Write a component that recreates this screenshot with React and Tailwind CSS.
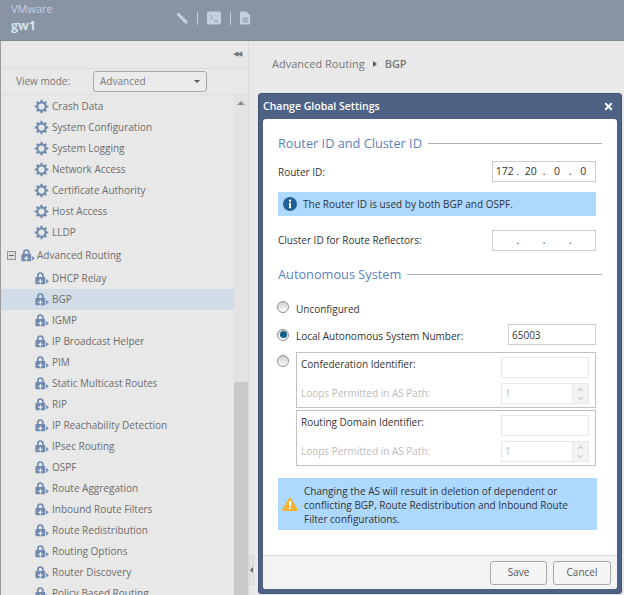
import React from 'react';
import { X, ChevronUp, ChevronDown } from 'lucide-react';

const font = "font-['Open_Sans','Liberation_Sans',sans-serif]";

const systemItems = ['Crash Data', 'System Configuration', 'System Logging', 'Network Access', 'Certificate Authority', 'Host Access', 'LLDP'];
const routingItems = [
  'DHCP Relay', 'BGP', 'IGMP', 'IP Broadcast Helper', 'PIM', 'Static Multicast Routes', 'RIP',
  'IP Reachability Detection', 'IPsec Routing', 'OSPF', 'Route Aggregation', 'Inbound Route Filters',
  'Route Redistribution', 'Routing Options', 'Router Discovery', 'Policy Based Routing',
];

function Gear() {
  return (
    <svg viewBox="0 0 16 16" className="w-[15px] h-[15px] shrink-0" fill="none">
      <circle cx="8" cy="8" r="4.4" stroke="#6f8bb0" strokeWidth="2.2" />
      <path d="M8 .8v3M8 12.2v3M.8 8h3M12.2 8h3M2.9 2.9l2.1 2.1M11 11l2.1 2.1M13.1 2.9L11 5M5 11l-2.100 2.100" stroke="#6f8bb0" strokeWidth="2.2" />
    </svg>
  );
}

function LockArrow() {
  return (
    <svg viewBox="0 0 16 16" className="w-[15px] h-[15px] shrink-0" fill="#6f8bb0">
      <path d="M3.200 6.500V4.800a3.600 3.600 0 0 1 7.200 0v1.700h.6c.6 0 1 .4 1 1v5.600c0 .6-.4 1-1 1H2.500c-.6 0-1-.4-1-1V7.500c0-.6.4-1 1-1zm1.800 0h3.600V4.800a1.800 1.800 0 0 0-3.600 0z" />
      <path d="M6.200 8.500v2H4.500v1.200h1.700v2h1.200v-2h1.700v-1.200H7.400v-2z" fill="#e8e8e8" />
      <path d="M13 8.500l2.800 2.500-2.800 2.500z" />
    </svg>
  );
}

function TreeRow({ label, active, icon: Icon }) {
  return (
    <div className={`h-[21px] flex items-center gap-[3px] pl-[33px] ${active ? 'bg-[#d0dce8]' : ''}`}>
      <Icon />
      <span className="text-[10px] text-[#6d6d6d] whitespace-nowrap">{label}</span>
    </div>
  );
}

function Sidebar() {
  return (
    <aside className="w-[249px] h-full shrink-0 flex flex-col bg-[#e8e8e8] border-l border-l-[#9a9a9a] border-r border-r-[#dcdcdc] overflow-hidden">
      <div className="h-[28px] shrink-0 flex items-center justify-end pr-[6px] border-b border-dotted border-[#d2d2d2]">
        <span className="text-[7px] text-[#777] tracking-[-1.5px] pr-[2px]">◀◀</span>
      </div>
      <div className="h-[26px] shrink-0 flex items-center pl-[15px] border-b border-dotted border-[#d2d2d2]">
        <span className="w-[77px] text-[10px] text-[#777]">View mode:</span>
        <div className="w-[114px] h-[21px] flex items-center justify-between pl-[6px] pr-[6px] rounded-[3px] border border-[#a8a8a8] bg-[#ebebeb]">
          <span className="text-[10px] text-[#7b7b7b]">Advanced</span>
          <span className="w-0 h-0 border-x-[3px] border-x-transparent border-t-[3px] border-t-[#555]" />
        </div>
      </div>
      <div className="flex-1 flex min-h-0">
        <div className="flex-1 min-w-0 overflow-hidden pt-[1px]">
          {systemItems.map((l) => <TreeRow key={l} label={l} icon={Gear} />)}
          <div className="h-[24px] flex items-center pl-[6px]">
            <span className="w-[9px] h-[9px] shrink-0 flex items-center justify-center border border-[#8b949f] bg-[#ddd] mr-[4px]">
              <span className="w-[5px] h-[1px] bg-[#666]" />
            </span>
            <LockArrow />
            <span className="ml-[2px] text-[10px] text-[#6d6d6d] whitespace-nowrap">Advanced Routing</span>
          </div>
          <div className="pt-[1px]">
            {routingItems.map((l) => <TreeRow key={l} label={l} icon={LockArrow} active={l === 'BGP'} />)}
          </div>
        </div>
        <div className="w-[14px] shrink-0 flex flex-col bg-[#e3e3e3]">
          <div className="h-[287px] flex justify-center pt-[6px]">
            <span className="w-0 h-0 border-x-[4px] border-x-transparent border-b-[4px] border-b-[#8c8c8c]" />
          </div>
          <div className="flex-1 bg-[#c9c9c9]" />
        </div>
      </div>
    </aside>
  );
}

function Heading({ children }) {
  return (
    <div className="flex items-center gap-[6px] h-[20px]">
      <span className="text-[12.75px] text-[#5b82bd] whitespace-nowrap pt-[2px]">{children}</span>
      <span className="flex-1 h-[1px] bg-[#abb1bf]" />
    </div>
  );
}

function Field({ className = '', children }) {
  return (
    <div className={`h-[21px] flex items-center bg-white border border-[#cdcdcd] text-[#333] text-[10px] ${className}`}>
      {children}
    </div>
  );
}

function IpField({ parts }) {
  return (
    <Field className="w-[104px] shrink-0 ml-auto">
      {parts.map((p, i) => (
        <React.Fragment key={i}>
          <span className="w-[23.5px] text-center text-[10.5px]">{p}</span>
          {i < 3 && <span className="w-[3px] text-center">.</span>}
        </React.Fragment>
      ))}
    </Field>
  );
}

function Radio({ checked }) {
  return (
    <span className="w-[12px] h-[12px] shrink-0 -ml-[1px] mr-[1px] rounded-full border border-[#8f8f8f] bg-gradient-to-b from-[#cfcfcf] to-white flex items-center justify-center">
      {checked && <span className="w-[7px] h-[7px] rounded-full bg-[#14608f]" />}
    </span>
  );
}

function LoopsRow() {
  return (
    <div className="flex items-center mt-[5px]">
      <span className="text-[10px] text-[#bcbcbc]">Loops Permitted in AS Path:</span>
      <div className="w-[88px] h-[21px] ml-auto flex border border-[#e8e8e8] bg-white">
        <span className="flex-1 pl-[3px] text-[10px] leading-[19px] text-[#c4c4c4]">1</span>
        <div className="w-[16px] flex flex-col items-center justify-center bg-[#f3f3f3] border-l border-[#e8e8e8] text-[#c8c8c8]">
          <ChevronUp size={9} strokeWidth={3} />
          <ChevronDown size={9} strokeWidth={3} />
        </div>
      </div>
    </div>
  );
}

function IdentifierBox({ label }) {
  return (
    <div className="h-[56px] border border-[#c2c2c2] pt-[4px] pl-[4px] pr-[6px]">
      <div className="flex items-start">
        <span className="text-[10px] text-[#333]">{label}</span>
        <div className="w-[88px] h-[21px] ml-auto bg-white border border-[#e8e8e8]" />
      </div>
      <LoopsRow />
    </div>
  );
}

function Modal() {
  return (
    <div className="absolute left-[258px] top-[93px] w-[364px] h-[501px] flex flex-col bg-[#4e6285] rounded-[3px] border border-[#3f5375] px-[4px] pb-[4px]">
      <div className="h-[25px] shrink-0 flex items-center justify-between pr-[3px]">
        <span className="text-[10.5px] font-semibold text-white">Change Global Settings</span>
        <X size={11} strokeWidth={4} className="text-white" />
      </div>
      <div className="flex-1 flex flex-col min-h-0 bg-white rounded-[3px] overflow-hidden">
        <div className="flex-1 px-[15px] pt-[14px]">
          <Heading>Router ID and Cluster ID</Heading>
          <div className="flex items-center mt-[8px] pr-[6px]">
            <span className="text-[10px] text-[#333] pt-[1px]">Router ID:</span>
            <IpField parts={['172', '20', '0', '0']} />
          </div>
          <div className="h-[24px] flex items-center mt-[10px] mr-[6px] pl-[5px] gap-[6px] bg-[#add8ff]">
            <svg viewBox="0 0 14 14" className="w-[14px] h-[14px] shrink-0">
              <circle cx="7" cy="7" r="7" fill="#1f5f96" />
              <circle cx="7" cy="3.800" r="1.200" fill="#ffffff" />
              <rect x="6" y="5.800" width="2" height="5.400" fill="#ffffff" />
            </svg>
            <span className="text-[10px] text-[#333]">The Router ID is used by both BGP and OSPF.</span>
          </div>
          <div className="flex items-center mt-[14px] pr-[6px]">
            <span className="text-[10px] text-[#333]">Cluster ID for Route Reflectors:</span>
            <IpField parts={['', '', '', '']} />
          </div>
          <div className="mt-[13px]">
            <Heading>Autonomous System</Heading>
          </div>
          <div className="flex items-center gap-[6px] mt-[16px] h-[14px]">
            <Radio />
            <span className="text-[10px] text-[#333] pt-[5px]">Unconfigured</span>
          </div>
          <div className="flex items-center gap-[6px] mt-[10px] pr-[6px]">
            <Radio checked />
            <span className="text-[10px] text-[#333] pt-[3px]">Local Autonomous System Number:</span>
            <Field className="w-[88px] ml-auto pl-[3px] pt-[2px]">65003</Field>
          </div>
          <div className="flex gap-[6px] mt-[7px] pr-[6px]">
            <div className="pt-[3px]"><Radio /></div>
            <div className="flex-1 flex flex-col gap-[2px]">
              <IdentifierBox label="Confederation Identifier:" />
              <IdentifierBox label="Routing Domain Identifier:" />
            </div>
          </div>
          <div className="h-[52px] flex items-center mt-[12px] mr-[5px] pl-[4px] gap-[6px] bg-[#add8ff]">
            <svg viewBox="0 0 16 14" className="w-[16px] h-[14px] shrink-0">
              <path d="M8 .5c.5 0 .9.3 1.100.7l6.500 11c.5.8 0 1.800-1 1.800H1.400c-1 0-1.500-1-1-1.800l6.500-11C7.100.8 7.500.5 8 .5z" fill="#f5b133" />
              <rect x="7" y="4" width="2" height="5.200" fill="#ffffff" />
              <rect x="7" y="10.200" width="2" height="2" fill="#ffffff" />
            </svg>
            <p className="text-[10px] leading-[14px] text-[#333] pt-[2px]">
              Changing the AS will result in deletion of dependent or<br />
              conflicting BGP, Route Redistribution and Inbound Route<br />
              Filter configurations.
            </p>
          </div>
        </div>
        <div className="h-[34px] shrink-0 flex items-center justify-end gap-[6px] pr-[6px] bg-[#f3f3f3] border-t border-[#d4d4d4]">
          <button className="w-[57px] h-[24px] rounded-[3px] border border-[#a8a8a8] bg-[#f5f5f5] text-[10px] text-[#555]">Save</button>
          <button className="w-[58px] h-[24px] rounded-[3px] border border-[#a8a8a8] bg-[#f5f5f5] text-[10px] text-[#555]">Cancel</button>
        </div>
      </div>
    </div>
  );
}

export default function App() {
  return (
    <div className={`relative w-[624px] h-[595px] overflow-hidden flex flex-col bg-[#e8e8e8] ${font}`}>
      <header className="h-[41px] shrink-0 flex bg-[#8893a3] border-b border-[#7d8796]">
        <div className="w-[176px] pl-[11px] pt-[1px]">
          <div className="text-[11px] leading-[15px] text-[#c2cfe0]">VMware</div>
          <div className="text-[12.5px] leading-[16px] mt-[2px] font-bold text-[#d7e2ef]">gw1</div>
        </div>
        <div className="flex items-center gap-[9px] pb-[4px]">
          <svg viewBox="0 0 12 12" className="w-[12px] h-[12px]" fill="#c3d0e0">
            <path d="M.5 2.500L2.500.5l9 8.500v2.500H9z" />
          </svg>
          <span className="w-[1px] h-[13px] bg-[#c3d0e0]" />
          <svg viewBox="0 0 14 14" className="w-[14px] h-[14px]">
            <rect width="14" height="13" y=".5" rx="2" fill="#c3d0e0" />
            <path d="M3 4l2.500 2.500L3 9M7 10h4" stroke="#8893a3" strokeWidth="1" fill="none" />
          </svg>
          <span className="w-[1px] h-[13px] bg-[#c3d0e0]" />
          <svg viewBox="0 0 12 14" className="w-[11px] h-[14px]">
            <path d="M1 0h6l4 4v9a1 1 0 0 1-1 1H1a1 1 0 0 1-1-1V1a1 1 0 0 1 1-1z" fill="#c3d0e0" />
            <path d="M3 7h6M3 9h6M3 11h6" stroke="#8893a3" strokeWidth="1" />
          </svg>
        </div>
      </header>
      <div className="flex-1 flex min-h-0">
        <Sidebar />
        <main className="relative flex-1 bg-[#e9e9e9] pl-[23px] pt-[15px]">
          <div className="flex items-center gap-[8px] text-[11px] text-[#777]">
            <span>Advanced Routing</span>
            <span className="w-0 h-0 border-y-[3px] border-y-transparent border-l-[4px] border-l-[#555]" />
            <span className="font-semibold">BGP</span>
          </div>
          <div className="absolute left-[0px] top-[514px] w-[5px] h-[30px] flex items-center bg-[#e2e2e2] border border-[#d6d6d6]">
            <span className="w-0 h-0 border-y-[3px] border-y-transparent border-r-[3px] border-r-[#666]" />
          </div>
        </main>
      </div>
      <Modal />
    </div>
  );
}
